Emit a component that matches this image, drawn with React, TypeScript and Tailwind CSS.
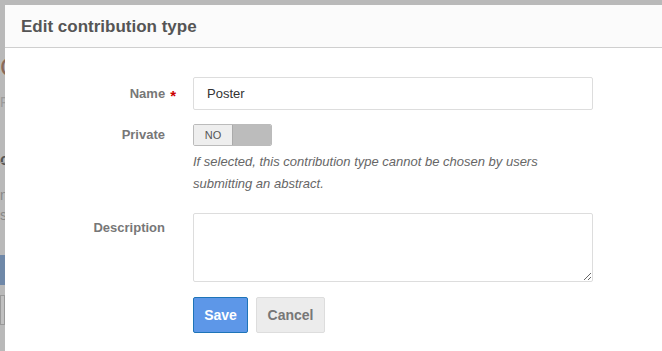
export default function App() {
  return (
    <div className="relative h-[351px] w-[662px] overflow-hidden bg-[#b9b9b9] font-['Liberation_Sans',Arial,sans-serif]">
      {/* greyed page behind the dialog */}
      <div className="absolute left-0 top-[54px] text-[26px] leading-none text-[#8a6a5a]">C</div>
      <div className="absolute left-0 top-[92px] text-[14px] text-[#9a9a9a]">F</div>
      <div className="absolute left-0 top-[148px] text-[16px] font-bold text-[#555]">o</div>
      <div className="absolute left-0 top-[162px] h-px w-[6px] bg-[#a0a0a0]" />
      <div className="absolute left-0 top-[185px] text-[14px] text-[#888]">n</div>
      <div className="absolute left-0 top-[205px] text-[14px] text-[#888]">s</div>
      <div className="absolute left-0 top-[255px] h-[30px] w-[6px] bg-[#6f88a8]" />
      <div className="absolute left-0 top-[295px] h-[30px] w-[5px] border border-[#999] bg-[#c0c0c0]" />

      <div className="absolute left-[5px] top-[5px] h-[400px] w-[700px] bg-white">
        <div className="flex h-[43px] items-center border-b border-[#cfcfcf] bg-[#fbfbfb] px-[16px]">
          <h2 className="pt-[1px] text-[17px] font-bold text-[#555]">Edit contribution type</h2>
        </div>

        <div className="flex flex-col pt-[29px] text-[13px]">
          <div className="flex items-center">
            <label className="w-[171px] text-right font-bold text-[#777]">
              Name
              <span className="relative top-[3px] ml-[5px] text-[15px] text-[#c00]">*</span>
            </label>
            <div className="ml-[17px] flex h-[33px] w-[400px] items-center rounded-[2px] border border-[#ddd] px-[13px] text-[#333]">
              Poster
            </div>
          </div>

          <div className="mt-[14px] flex">
            <label className="w-[160px] pt-[1px] text-right font-bold text-[#777]">Private</label>
            <div className="ml-[28px] flex flex-col">
              <div className="flex h-[22px] w-[79px] overflow-hidden rounded-[2px] border border-[#bbb]">
                <div className="flex w-[38px] items-center justify-center bg-[#eee] text-[11px] text-[#555]">NO</div>
                <div className="flex-1 border-l border-[#aaa] bg-[#bcbcbc]" />
              </div>
              <p className="mt-[5px] text-[13px] italic leading-[22px] text-[#666]">
                If selected, this contribution type cannot be chosen by users
                <br />
                submitting an abstract.
              </p>
            </div>
          </div>

          <div className="mt-[18px] flex">
            <label className="w-[160px] pt-[5px] text-right font-bold text-[#777]">Description</label>
            <textarea className="ml-[28px] h-[69px] w-[400px] resize rounded-[2px] border border-[#ddd] outline-none" />
          </div>

          <div className="ml-[188px] mt-[15px] flex gap-[8px]">
            <button className="h-[36px] w-[55px] rounded-[2px] border border-[#1e74b8] bg-[#5d97e8] text-[14px] font-bold text-white">
              Save
            </button>
            <button className="h-[36px] w-[69px] rounded-[2px] border border-[#ddd] bg-[#ececec] text-[14px] font-bold text-[#777]">
              Cancel
            </button>
          </div>
        </div>
      </div>
    </div>
  );
}
